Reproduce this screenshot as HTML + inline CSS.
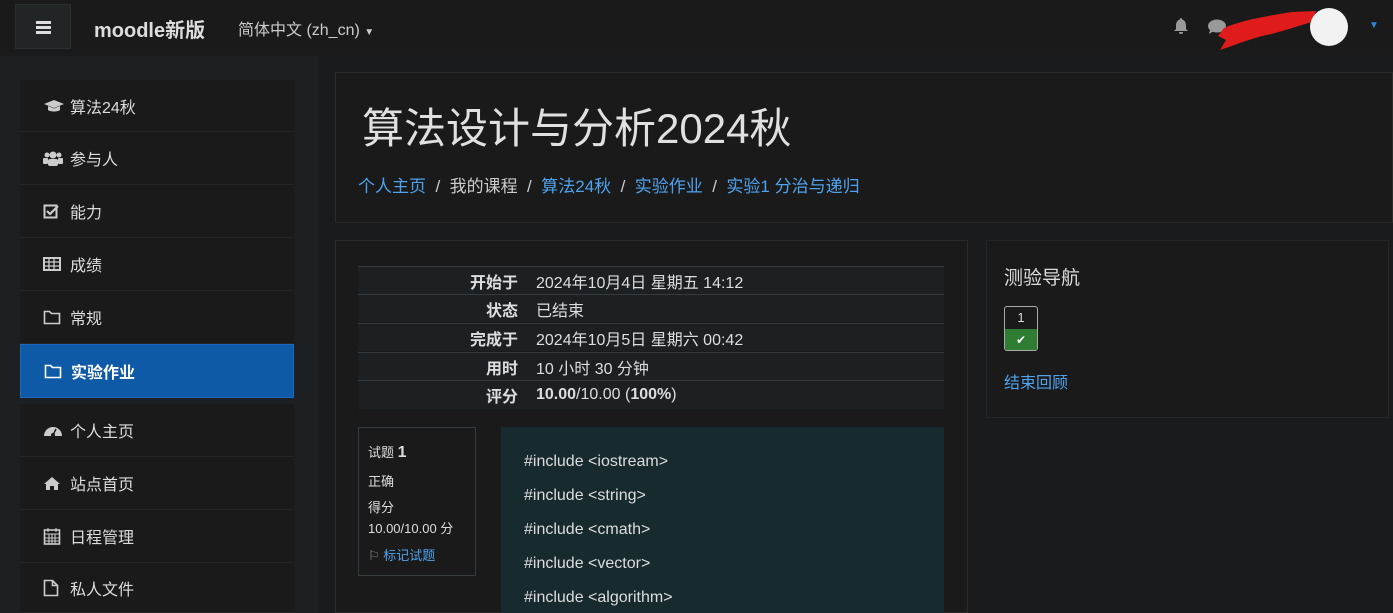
<!DOCTYPE html>
<html><head><meta charset="utf-8"><style>
*{box-sizing:border-box;margin:0;padding:0}
html,body{width:1393px;height:613px;overflow:hidden}
body{background:#1a1b1c;font-family:"Liberation Sans","Noto Sans CJK SC",sans-serif;color:#ddd;position:relative}
.abs{position:absolute}
.nav{left:0;top:0;width:1393px;height:52px;background:#1a1a1a}
.burger{left:15px;top:4px;width:56px;height:45px;background:#222526;border:1px solid #2c2f30}
.side{left:0;top:56px;width:318px;height:557px;background:#1d2022}
.item{position:absolute;left:20px;width:274px;background:#1a1a1a;border-bottom:1px solid #262626;font-size:16px;color:#ddd;padding-left:50px;display:flex;align-items:center}
.item svg{position:absolute;left:23px}
.active{background:#0f5aa6;color:#fff;font-weight:bold;border:1px solid #1c6ac0}
a{color:#4ea3ee;text-decoration:none}
.row{position:absolute;left:358px;width:586px;height:28px;background:#1d2023;border-top:1px solid #343a3e;font-size:16px;display:flex;align-items:center}
.row b{width:160px;text-align:right;margin-right:18px;color:#ddd}
.code{left:501px;top:427px;width:443px;height:186px;background:#172a2e;padding:18px 0 0 23px;font-size:16px;color:#ddd;line-height:34px}
</style></head><body>
<div class="abs nav"></div>
<div class="abs burger"><div style="position:absolute;left:20px;top:16px;width:15px;height:3px;background:#ddd;box-shadow:0 5px 0 #ddd,0 10px 0 #ddd"></div></div>
<div class="abs" style="left:94px;top:14px;font-size:20px;font-weight:bold;color:#ddd">moodle新版</div>
<div class="abs" style="left:238px;top:16px;font-size:16px;color:#ccc">简体中文 (zh_cn) <span style="font-size:10px">▼</span></div>
<svg class="abs" style="left:1172px;top:17px" width="18" height="18" viewBox="0 0 18 18"><path d="M9 1c1 0 1 1 1 1.5C13 3 14 6 14 9v3l2 2H2l2-2V9c0-3 1-6 4-6.5C8 2 8 1 9 1zM7 15h4a2 2 0 0 1-4 0z" fill="#999"/></svg>
<svg class="abs" style="left:1207px;top:18px" width="20" height="18" viewBox="0 0 20 18"><ellipse cx="10" cy="8" rx="9" ry="6.5" fill="#999"/><path d="M3 12l-1 4 5-3z" fill="#999"/></svg>
<svg class="abs" style="left:1212px;top:6px" width="110" height="46" viewBox="0 0 110 46"><path d="M12 22 C30 14 55 10 80 6 L104 5 L100 16 C85 20 70 26 50 30 C35 34 20 40 8 44 L14 34 L6 30 Z" fill="#e01b1b"/></svg>
<div class="abs" style="left:1310px;top:8px;width:38px;height:38px;border-radius:50%;background:#f2f2f2"></div>
<div class="abs" style="left:1369px;top:20px;font-size:10px;color:#2f86d6">▼</div>

<div class="abs side"></div>
<div class="item" style="top:80px;height:52px"><svg width="22" height="16" viewBox="0 0 22 16"><path d="M11 2L1 6l10 4 10-4z M5 8v4c2 2 10 2 12 0V8l-6 2.5z" fill="#ccc"/></svg>算法24秋</div>
<div class="item" style="top:132px;height:53px"><svg width="20" height="16" viewBox="0 0 20 16"><circle cx="10" cy="5" r="3.5" fill="#ccc"/><circle cx="4" cy="5" r="2.5" fill="#ccc"/><circle cx="16" cy="5" r="2.5" fill="#ccc"/><rect x="5" y="9" width="10" height="7" rx="2" fill="#ccc"/><rect x="0" y="8" width="5" height="6" rx="1" fill="#ccc"/><rect x="15" y="8" width="5" height="6" rx="1" fill="#ccc"/></svg>参与人</div>
<div class="item" style="top:185px;height:53px"><svg width="18" height="16" viewBox="0 0 18 16"><rect x="1.5" y="2.5" width="12" height="12" fill="none" stroke="#ccc" stroke-width="2"/><path d="M4 8l3 3 8-8" fill="none" stroke="#ccc" stroke-width="2.2"/></svg>能力</div>
<div class="item" style="top:238px;height:53px"><svg width="18" height="16" viewBox="0 0 18 16"><rect x="1" y="2" width="16" height="12" fill="none" stroke="#ccc" stroke-width="2"/><path d="M1 6h16M1 10h16M6 2v12M11 2v12" stroke="#ccc" stroke-width="1.3"/></svg>成绩</div>
<div class="item" style="top:291px;height:53px"><svg width="18" height="16" viewBox="0 0 18 16"><path d="M1.5 2.5h5l2 2h8v10h-15z" fill="none" stroke="#ccc" stroke-width="1.6"/></svg>常规</div>
<div class="item active" style="top:344px;height:54px"><svg width="18" height="16" viewBox="0 0 18 16"><path d="M1.5 2.5h5l2 2h8v10h-15z" fill="none" stroke="#fff" stroke-width="1.6"/></svg>实验作业</div>
<div class="item" style="top:404px;height:53px"><svg width="20" height="16" viewBox="0 0 20 16"><path d="M1 14a9 9 0 1 1 18 0z" fill="#ccc"/><circle cx="10" cy="13" r="2" fill="#1a1a1a"/><path d="M10 13l3-6" stroke="#1a1a1a" stroke-width="1.5"/></svg>个人主页</div>
<div class="item" style="top:457px;height:53px"><svg width="18" height="16" viewBox="0 0 18 16"><path d="M9 2L1 9h2v6h4v-4h4v4h4V9h2z" fill="#ccc"/></svg>站点首页</div>
<div class="item" style="top:510px;height:53px"><svg width="18" height="18" viewBox="0 0 18 18"><rect x="1.5" y="3" width="15" height="14" fill="none" stroke="#ccc" stroke-width="1.6"/><path d="M1.5 7h15M5 1v4M13 1v4M1.5 11h15M1.5 14h15M6 7v10M9 7v10M12 7v10" stroke="#ccc" stroke-width="1.1"/></svg>日程管理</div>
<div class="item" style="top:563px;height:50px"><svg width="16" height="18" viewBox="0 0 16 18"><path d="M1.5 1.5h8l5 5v10h-13z M9.5 1.5v5h5" fill="none" stroke="#ccc" stroke-width="1.6"/></svg>私人文件</div>

<div class="abs" style="left:335px;top:72px;width:1058px;height:151px;background:#1a1a1a;border:1px solid #2b2b2b"></div>
<div class="abs" style="left:362px;top:104px;font-size:42px;color:#e0e0e0;line-height:50px">算法设计与分析2024秋</div>
<div class="abs" style="left:358px;top:172px;font-size:17px;color:#ccc"><a>个人主页</a> &nbsp;/&nbsp; 我的课程 &nbsp;/&nbsp; <a>算法24秋</a> &nbsp;/&nbsp; <a>实验作业</a> &nbsp;/&nbsp; <a>实验1 分治与递归</a></div>

<div class="abs" style="left:335px;top:240px;width:633px;height:373px;background:#1a1a1a;border:1px solid #2b2b2b"></div>
<div class="row" style="top:266px"><b>开始于</b>2024年10月4日 星期五 14:12</div>
<div class="row" style="top:294px"><b>状态</b>已结束</div>
<div class="row" style="top:323px"><b>完成于</b>2024年10月5日 星期六 00:42</div>
<div class="row" style="top:352px"><b>用时</b>10 小时 30 分钟</div>
<div class="row" style="top:380px;height:29px"><b>评分</b><span><strong>10.00</strong>/10.00 (<strong>100%</strong>)</span></div>

<div class="abs" style="left:358px;top:427px;width:118px;height:149px;background:#1a1a1a;border:1px solid #343a3e;padding:12px 9px;font-size:13px;color:#ddd;line-height:1.6">
<div>试题 <b style="font-size:16px">1</b></div><div style="margin-top:6px">正确</div><div style="margin-top:6px">得分</div><div>10.00/10.00 分</div><div style="margin-top:6px;color:#888">⚐ <a>标记试题</a></div></div>
<div class="abs code">#include &lt;iostream&gt;<br>#include &lt;string&gt;<br>#include &lt;cmath&gt;<br>#include &lt;vector&gt;<br>#include &lt;algorithm&gt;</div>

<div class="abs" style="left:986px;top:240px;width:403px;height:178px;background:#1a1a1a;border:1px solid #262626"></div>
<div class="abs" style="left:1004px;top:263px;font-size:19px;color:#ddd">测验导航</div>
<div class="abs" style="left:1004px;top:306px;width:34px;height:45px;border:1px solid #aaa;border-radius:3px;overflow:hidden;background:#1a1a1a"><div style="text-align:center;font-size:13px;height:22px;line-height:22px;color:#ddd">1</div><div style="background:#2e7d32;height:23px;text-align:center;color:#fff;font-size:12px;line-height:23px">✔</div></div>
<div class="abs" style="left:1004px;top:369px;font-size:16px"><a>结束回顾</a></div>
</body></html>
